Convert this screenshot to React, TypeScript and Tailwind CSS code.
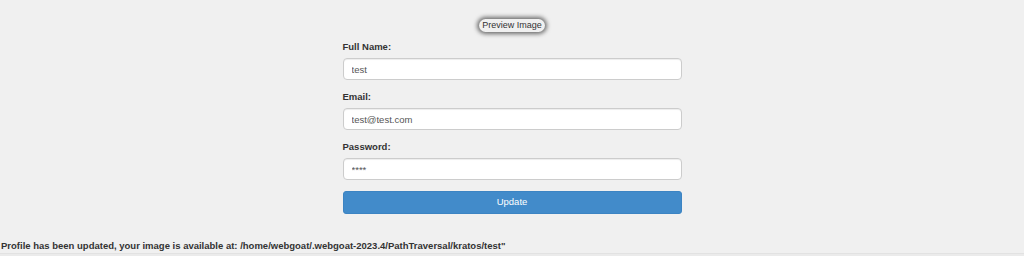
import React from 'react';

const fields = [
  { label: 'Full Name:', value: 'test' },
  { label: 'Email:', value: 'test@test.com' },
  { label: 'Password:', value: '****' },
];

export default function App() {
  return (
    <div className="w-full h-[256px] bg-[#f0f0f0] overflow-hidden flex flex-col font-['Liberation_Sans',Arial,sans-serif] text-[#333]">
      <div className="flex justify-center pt-[19px]">
        <span className="h-[13px] leading-[13px] px-[3px] text-[9px] text-[#333] rounded-full shadow-[0_0_4px_2px_rgba(0,0,0,0.55)]">
          Preview Image
        </span>
      </div>
      <form className="w-[339px] mx-auto mt-[6px] flex flex-col">
        {fields.map((f) => (
          <div key={f.label} className="flex flex-col mb-[8px]">
            <label className="text-[9.5px] font-bold leading-[17px] mb-[3px] text-[#333]">{f.label}</label>
            <input
              readOnly
              defaultValue={f.value}
              className="h-[22px] bg-white border border-[#ccc] rounded-[4px] pl-[8px] text-[9.5px] text-[#555] outline-none shadow-[inset_0_1px_1px_rgba(0,0,0,0.075)]"
            />
          </div>
        ))}
        <button
          type="button"
          className="mt-[3px] h-[23px] bg-[#428bca] border border-[#3c84c3] rounded-[3px] text-[9.5px] text-white"
        >
          Update
        </button>
      </form>
      <div className="mt-[25px] pl-[1px] text-[9.5px] font-bold leading-[14px] text-[#333] whitespace-nowrap">
        Profile has been updated, your image is available at: /home/webgoat/.webgoat-2023.4/PathTraversal/kratos/test"
      </div>
      <div className="flex-1 border-t border-[#e2e2e2] bg-[#ebebeb]" />
    </div>
  );
}
